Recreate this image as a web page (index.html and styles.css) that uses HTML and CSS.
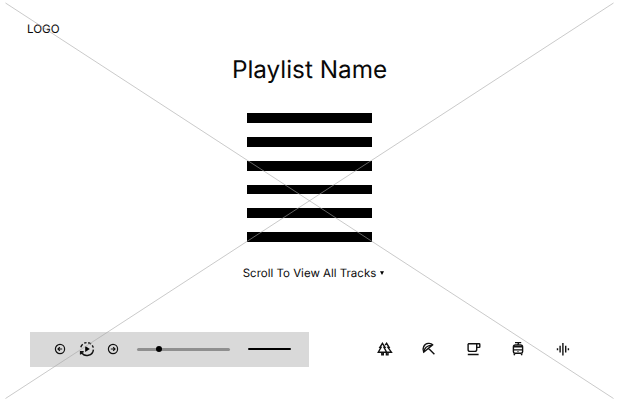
FILE: index.html
```html
<!DOCTYPE html>
<html lang="en">
<head>
<meta charset="utf-8">
<title>Playlist</title>
<link rel="stylesheet" href="styles.css">
</head>
<body>
<div class="page">
  <header class="logo">LOGO</header>
  <main class="playlist">
    <h1 class="title">Playlist Name</h1>
    <div class="tracks">
      <div class="track"></div>
      <div class="track"></div>
      <div class="track"></div>
      <div class="track"></div>
      <div class="track"></div>
      <div class="track"></div>
    </div>
    <div class="more"><span>Scroll To View All Tracks</span><svg class="caret" viewBox="0 0 4 4"><path d="M0 .3h4L2 4z"/></svg></div>
  </main>
  <footer class="footer">
    <div class="player">
      <svg class="skip" viewBox="0 0 12 12"><circle cx="6" cy="6" r="4.6"/><path d="M8.2 6H4M5.8 4.2 4 6l1.8 1.8"/></svg>
      <svg class="play" viewBox="0 0 16 16"><path class="arc" d="M1.8 6.3A6.4 6.4 0 0 1 3.7 3.2M5.2 2.2A6.4 6.4 0 0 1 7.5 1.6M9.2 1.7A6.4 6.4 0 0 1 12 3M13.2 4.3A6.4 6.4 0 0 1 14.3 6.7M14.4 8.6A6.4 6.4 0 0 1 2.5 11.3M1.6 13.6V10.8H4.7"/><path class="solid" d="M6.2 5v6L10.8 8z"/></svg>
      <svg class="skip" viewBox="0 0 12 12"><circle cx="6" cy="6" r="4.6"/><path d="M3.8 6H8M6.2 4.2 8 6 6.2 7.8"/></svg>
      <div class="seek"><span class="knob"></span></div>
      <div class="volume"></div>
    </div>
    <nav class="moods">
      <svg class="mood" viewBox="0 0 16 16"><path d="M5.4 2.3 2.9 6.4H4L1.3 11.2H9.6L7 6.4H8ZM4.8 11.2V13.9H6.3V11.2M8.2 4.2 9.6 2.3 12.1 6.4H11L14.4 11.2H9.8M9.4 11.2V13.9H11V11.2"/></svg>
      <svg class="mood" viewBox="0 0 16 16"><path d="M2.7 11.2C.8 7.5 3.1 2.8 7.2 2.4 9 2.2 10.8 2.8 11.6 3.8ZM2.9 11C3.1 8 5.3 4.7 11.4 3.9M7.4 7.3 13.4 13.3"/></svg>
      <svg class="mood" viewBox="0 0 16 16"><path d="M2.1 2.8H13.2Q13.8 2.8 13.8 3.4V5.8Q13.8 6.4 13.2 6.4H10.8M2.1 2.8V8.5Q2.1 10.4 4 10.4H8.8Q10.7 10.4 10.7 8.5V2.8M1.8 13.5H12.6"/></svg>
      <svg class="mood" viewBox="0 0 16 16"><path d="M5 1.6H11.2M8.7 1.8 7.7 4M3.4 10.8V5.8Q3.4 4 5.4 4H10.6Q12.6 4 12.6 5.8V10.8Q12.6 12.3 11 12.3H5Q3.4 12.3 3.4 10.8ZM3.4 5.7H12.6M3.4 8.9H12.6M5 12.3 4 14.3M11 12.3 12 14.3"/><circle class="solid" cx="8" cy="10.6" r=".6"/></svg>
      <svg class="mood" viewBox="0 0 16 16"><path d="M2.5 7.2V9.2M5.1 4.8V11.6M7.9 2V14.4M10.7 4.8V11.6M13.4 7.2V9.2"/></svg>
    </nav>
  </footer>
  <svg class="cross" viewBox="0 0 619 402"><path d="M5.5 3 613.5 398.5M5.5 398.5 613.5 3"/></svg>
</div>
</body>
</html>
```
FILE: styles.css
```css
* { box-sizing: border-box; }
body {
  margin: 0;
  background: #fff;
  color: #090909;
  font-family: Inter, "Liberation Sans", sans-serif;
  text-rendering: geometricPrecision;
}
.page {
  position: relative;
  display: flex;
  flex-direction: column;
  width: 619px;
  height: 402px;
  overflow: hidden;
}
.logo {
  padding: 21px 0 0 27px;
  height: 51px;
  font-size: 11.6px;
  line-height: 16px;
}
.playlist {
  display: flex;
  flex-direction: column;
  align-items: center;
  height: 281px;
}
.title {
  margin: 0;
  font-size: 24.3px;
  line-height: 36px;
  font-weight: 400;
  white-space: nowrap;
}
.tracks {
  display: flex;
  flex-direction: column;
  justify-content: space-between;
  width: 124.5px;
  height: 128.5px;
  margin: 26.4px 0 0;
}
.track {
  height: 9.8px;
  background: #000;
}
.more {
  display: flex;
  align-items: center;
  gap: 4px;
  margin: 23.1px 0 0 8px;
  font-size: 11.5px;
  line-height: 16px;
  white-space: nowrap;
}
.caret { width: 4px; height: 4px; }
.footer {
  display: flex;
  align-items: flex-start;
  padding-left: 30px;
}
.player {
  display: flex;
  align-items: center;
  width: 279px;
  height: 35px;
  padding: 0 0 1px 24px;
  background: #d9d9d9;
}
svg { display: block; flex: none; }
.skip, .play, .mood {
  fill: none;
  stroke: #111;
  stroke-width: 1.2;
}
.skip { width: 12px; height: 12px; }
.play { width: 16px; height: 16px; margin: 0 12px 0 12.5px; }
.solid { fill: #000; stroke: none; }
.arc { stroke-width: 1.4; }
.seek {
  display: flex;
  align-items: center;
  width: 93px;
  height: 3px;
  margin: 0 18.5px 0 18px;
  padding-left: 19px;
  border-radius: 2px;
  background: #8f8f8f;
}
.knob {
  width: 6px;
  height: 6px;
  border-radius: 50%;
  background: #000;
}
.volume {
  width: 43px;
  height: 2px;
  border-radius: 1px;
  background: #000;
}
.moods {
  display: flex;
  gap: 28.5px;
  margin: 8.5px 0 0 67.5px;
}
.mood { width: 16px; height: 16px; stroke-width: 1.4; }
.cross {
  position: absolute;
  inset: 0;
  width: 619px;
  height: 402px;
  fill: none;
  stroke: #a6a6a6;
  stroke-width: .6;
  pointer-events: none;
}
```
